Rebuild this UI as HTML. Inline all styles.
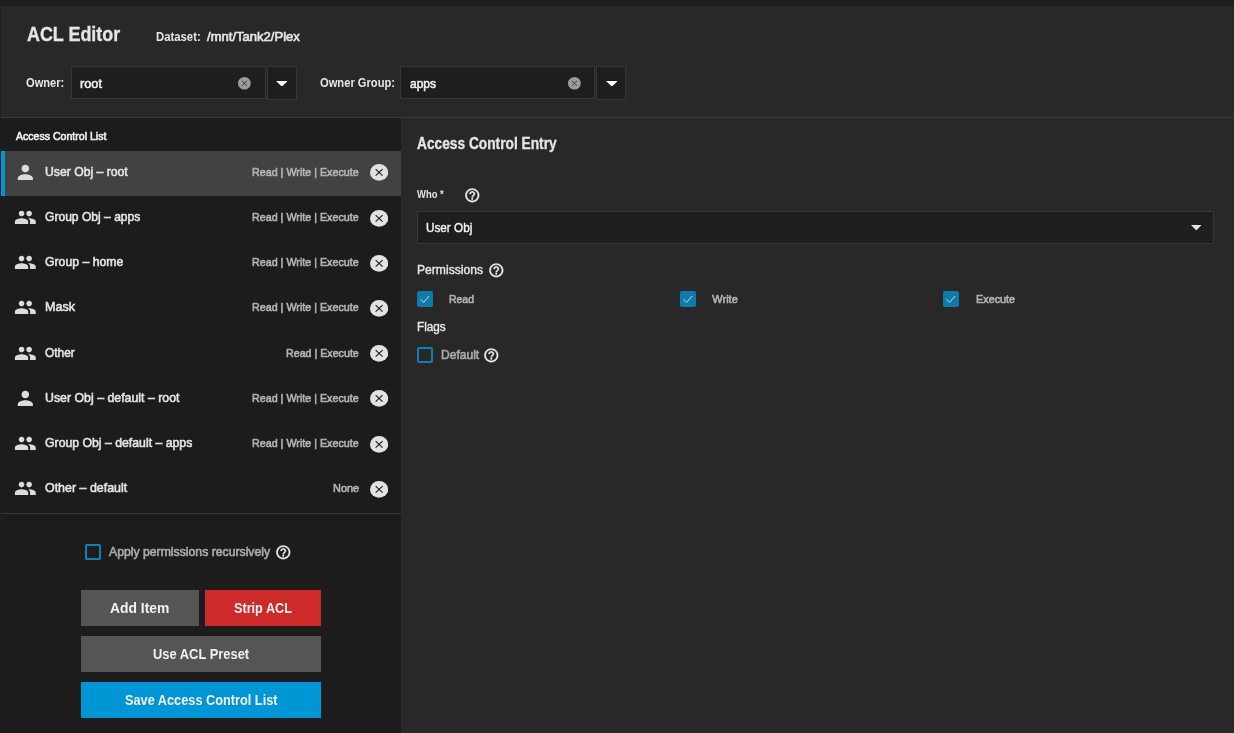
<!DOCTYPE html>
<html lang="en"><head><meta charset="utf-8"><title>ACL Editor</title>
<style>
html,body{margin:0;padding:0;}
body{width:1234px;height:733px;overflow:hidden;background:#1e1e1e;position:relative;font-family:"Liberation Sans",sans-serif;}
.b{position:absolute;display:block;}
.t{position:absolute;line-height:0;white-space:nowrap;transform-origin:0 0;}
#w{position:absolute;left:0;top:0;width:1234px;height:733px;will-change:transform;}
</style></head><body><div id="w">
<div class="b" style="left:1px;top:6px;width:1233px;height:111px;background:#282828;"></div>
<div class="b" style="left:1px;top:117px;width:1233px;height:1px;background:#3a3a3a;"></div>
<span class="t" style="left:26.50px;top:34.44px;font-size:19.5px;color:#e6e6e6;font-weight:700;transform:scaleX(0.9185);-webkit-text-stroke:0.3px;">ACL Editor</span>
<span class="t" style="left:155.80px;top:36.74px;font-size:12px;color:#e6e6e6;font-weight:700;transform:scaleX(0.9442);">Dataset:</span>
<span class="t" style="left:207.10px;top:36.74px;font-size:12px;color:#e6e6e6;transform:scaleX(1.0881);-webkit-text-stroke:0.6px;">/mnt/Tank2/Plex</span>
<span class="t" style="left:26.10px;top:82.84px;font-size:12px;color:#e6e6e6;font-weight:700;transform:scaleX(0.9264);">Owner:</span>
<div class="b" style="left:71px;top:66px;width:195px;height:33px;background:#1e1e1e;border:1px solid #373737;box-sizing:border-box;"></div>
<span class="t" style="left:79.50px;top:83.90px;font-size:13px;color:#f0f0f0;transform:scaleX(0.9819);-webkit-text-stroke:0.55px;">root</span>
<svg class="b" style="left:238.1px;top:77.3px" width="12.8" height="12.6" viewBox="0 0 20 20" preserveAspectRatio="none"><circle cx="10" cy="10" r="10" fill="#9b9b9b"/><path d="M6 6l8 8M14 6l-8 8" stroke="#2a2a2a" stroke-width="1.3" fill="none"/></svg>
<div class="b" style="left:267px;top:66px;width:30px;height:34px;background:#1e1e1e;border:1px solid #373737;box-sizing:border-box;"></div>
<svg class="b" style="left:275.6px;top:80.7px" width="11.8" height="5.6" viewBox="0 0 10 5" preserveAspectRatio="none"><path fill="#fff" d="M0 0h10L5 5z"/></svg>
<span class="t" style="left:319.50px;top:82.84px;font-size:12px;color:#e6e6e6;font-weight:700;transform:scaleX(0.9297);">Owner Group:</span>
<div class="b" style="left:400px;top:66px;width:195px;height:33px;background:#1e1e1e;border:1px solid #373737;box-sizing:border-box;"></div>
<span class="t" style="left:409.50px;top:83.90px;font-size:13px;color:#f0f0f0;transform:scaleX(0.9188);-webkit-text-stroke:0.55px;">apps</span>
<svg class="b" style="left:568.0px;top:77.3px" width="12.8" height="12.6" viewBox="0 0 20 20" preserveAspectRatio="none"><circle cx="10" cy="10" r="10" fill="#9b9b9b"/><path d="M6 6l8 8M14 6l-8 8" stroke="#2a2a2a" stroke-width="1.3" fill="none"/></svg>
<div class="b" style="left:596px;top:66px;width:30px;height:34px;background:#1e1e1e;border:1px solid #373737;box-sizing:border-box;"></div>
<svg class="b" style="left:605.5px;top:80.7px" width="11.8" height="5.6" viewBox="0 0 10 5" preserveAspectRatio="none"><path fill="#fff" d="M0 0h10L5 5z"/></svg>
<div class="b" style="left:1px;top:118px;width:400px;height:615px;background:#1c1c1c;"></div>
<span class="t" style="left:16.10px;top:136.19px;font-size:11px;color:#f0f0f0;transform:scaleX(0.9603);-webkit-text-stroke:0.6px;">Access Control List</span>
<div class="b" style="left:1px;top:151px;width:400px;height:45px;background:#424242;border-left:4px solid #0095d5;box-sizing:border-box;"></div>
<svg class="b" style="left:14.15px;top:161.15px" width="22.7" height="22.7" viewBox="0 0 24 24" preserveAspectRatio="none"><path fill="#dcdcdc" d="M12 12c2.21 0 4-1.79 4-4s-1.79-4-4-4-4 1.79-4 4 1.79 4 4 4zm0 2c-2.67 0-8 1.34-8 4v2h16v-2c0-2.660-5.330-4-8-4z"/></svg>
<span class="t" style="left:44.90px;top:171.60px;font-size:13px;color:#e6e6e6;transform:scaleX(0.9383);-webkit-text-stroke:0.55px;">User Obj – root</span>
<span class="t" style="left:252.00px;top:172.19px;font-size:11px;color:#b4b4b4;transform:scaleX(0.9748);-webkit-text-stroke:0.6px;">Read | Write | Execute</span>
<svg class="b" style="left:370.0px;top:164.0px" width="18.2" height="16.8" viewBox="0 0 20 20" preserveAspectRatio="none"><circle cx="10" cy="10" r="10" fill="#e2e2e2"/><path d="M6.2 6.2l7.6 7.6M13.8 6.2l-7.6 7.6" stroke="#1c1c1c" stroke-width="1.2" fill="none"/></svg>
<svg class="b" style="left:14.15px;top:205.95px" width="22.7" height="22.7" viewBox="0 0 24 24" preserveAspectRatio="none"><path fill="#dcdcdc" d="M16 11c1.660 0 2.990-1.340 2.990-3S17.660 5 16 5c-1.660 0-3 1.340-3 3s1.340 3 3 3zm-8 0c1.660 0 2.990-1.340 2.990-3S9.660 5 8 5C6.340 5 5 6.340 5 8s1.340 3 3 3zm0 2c-2.330 0-7 1.170-7 3.500V19h14v-2.500c0-2.330-4.670-3.500-7-3.500zm8 0c-.29 0-.62.020-.97.050 1.160.84 1.970 1.970 1.970 3.450V19h6v-2.500c0-2.330-4.670-3.500-7-3.500z"/></svg>
<span class="t" style="left:44.90px;top:216.60px;font-size:13px;color:#e6e6e6;transform:scaleX(0.9288);-webkit-text-stroke:0.55px;">Group Obj – apps</span>
<span class="t" style="left:252.00px;top:217.19px;font-size:11px;color:#b4b4b4;transform:scaleX(0.9748);-webkit-text-stroke:0.6px;">Read | Write | Execute</span>
<svg class="b" style="left:370.0px;top:209.9px" width="18.2" height="16.8" viewBox="0 0 20 20" preserveAspectRatio="none"><circle cx="10" cy="10" r="10" fill="#e2e2e2"/><path d="M6.2 6.2l7.6 7.6M13.8 6.2l-7.6 7.6" stroke="#1c1c1c" stroke-width="1.2" fill="none"/></svg>
<svg class="b" style="left:14.15px;top:250.95px" width="22.7" height="22.7" viewBox="0 0 24 24" preserveAspectRatio="none"><path fill="#dcdcdc" d="M16 11c1.660 0 2.990-1.340 2.990-3S17.660 5 16 5c-1.660 0-3 1.340-3 3s1.340 3 3 3zm-8 0c1.660 0 2.990-1.340 2.990-3S9.660 5 8 5C6.340 5 5 6.340 5 8s1.340 3 3 3zm0 2c-2.330 0-7 1.170-7 3.500V19h14v-2.500c0-2.330-4.670-3.500-7-3.500zm8 0c-.29 0-.62.020-.97.050 1.160.84 1.970 1.970 1.970 3.450V19h6v-2.500c0-2.330-4.670-3.500-7-3.500z"/></svg>
<span class="t" style="left:44.90px;top:261.60px;font-size:13px;color:#e6e6e6;transform:scaleX(0.9421);-webkit-text-stroke:0.55px;">Group – home</span>
<span class="t" style="left:252.00px;top:262.19px;font-size:11px;color:#b4b4b4;transform:scaleX(0.9748);-webkit-text-stroke:0.6px;">Read | Write | Execute</span>
<svg class="b" style="left:370.0px;top:255.0px" width="18.2" height="16.8" viewBox="0 0 20 20" preserveAspectRatio="none"><circle cx="10" cy="10" r="10" fill="#e2e2e2"/><path d="M6.2 6.2l7.6 7.6M13.8 6.2l-7.6 7.6" stroke="#1c1c1c" stroke-width="1.2" fill="none"/></svg>
<svg class="b" style="left:14.15px;top:296.05px" width="22.7" height="22.7" viewBox="0 0 24 24" preserveAspectRatio="none"><path fill="#dcdcdc" d="M16 11c1.660 0 2.990-1.340 2.990-3S17.660 5 16 5c-1.660 0-3 1.340-3 3s1.340 3 3 3zm-8 0c1.660 0 2.990-1.340 2.990-3S9.660 5 8 5C6.340 5 5 6.340 5 8s1.340 3 3 3zm0 2c-2.330 0-7 1.170-7 3.500V19h14v-2.500c0-2.330-4.670-3.500-7-3.500zm8 0c-.29 0-.62.020-.97.050 1.160.84 1.970 1.970 1.970 3.450V19h6v-2.500c0-2.330-4.670-3.500-7-3.500z"/></svg>
<span class="t" style="left:44.90px;top:306.70px;font-size:13px;color:#e6e6e6;transform:scaleX(0.9680);-webkit-text-stroke:0.55px;">Mask</span>
<span class="t" style="left:252.00px;top:307.29px;font-size:11px;color:#b4b4b4;transform:scaleX(0.9748);-webkit-text-stroke:0.6px;">Read | Write | Execute</span>
<svg class="b" style="left:370.0px;top:300.0px" width="18.2" height="16.8" viewBox="0 0 20 20" preserveAspectRatio="none"><circle cx="10" cy="10" r="10" fill="#e2e2e2"/><path d="M6.2 6.2l7.6 7.6M13.8 6.2l-7.6 7.6" stroke="#1c1c1c" stroke-width="1.2" fill="none"/></svg>
<svg class="b" style="left:14.15px;top:342.05px" width="22.7" height="22.7" viewBox="0 0 24 24" preserveAspectRatio="none"><path fill="#dcdcdc" d="M16 11c1.660 0 2.990-1.340 2.990-3S17.660 5 16 5c-1.660 0-3 1.340-3 3s1.340 3 3 3zm-8 0c1.660 0 2.990-1.340 2.990-3S9.660 5 8 5C6.340 5 5 6.340 5 8s1.340 3 3 3zm0 2c-2.330 0-7 1.170-7 3.500V19h14v-2.500c0-2.330-4.670-3.500-7-3.500zm8 0c-.29 0-.62.020-.97.050 1.160.84 1.970 1.970 1.970 3.450V19h6v-2.500c0-2.330-4.670-3.500-7-3.500z"/></svg>
<span class="t" style="left:44.90px;top:352.50px;font-size:13px;color:#e6e6e6;transform:scaleX(0.9165);-webkit-text-stroke:0.55px;">Other</span>
<span class="t" style="left:285.90px;top:353.09px;font-size:11px;color:#b4b4b4;transform:scaleX(0.9705);-webkit-text-stroke:0.6px;">Read | Execute</span>
<svg class="b" style="left:370.0px;top:345.0px" width="18.2" height="16.8" viewBox="0 0 20 20" preserveAspectRatio="none"><circle cx="10" cy="10" r="10" fill="#e2e2e2"/><path d="M6.2 6.2l7.6 7.6M13.8 6.2l-7.6 7.6" stroke="#1c1c1c" stroke-width="1.2" fill="none"/></svg>
<svg class="b" style="left:14.15px;top:386.85px" width="22.7" height="22.7" viewBox="0 0 24 24" preserveAspectRatio="none"><path fill="#dcdcdc" d="M12 12c2.21 0 4-1.79 4-4s-1.79-4-4-4-4 1.79-4 4 1.79 4 4 4zm0 2c-2.67 0-8 1.34-8 4v2h16v-2c0-2.660-5.330-4-8-4z"/></svg>
<span class="t" style="left:44.90px;top:397.50px;font-size:13px;color:#e6e6e6;transform:scaleX(0.9497);-webkit-text-stroke:0.55px;">User Obj – default – root</span>
<span class="t" style="left:252.00px;top:398.09px;font-size:11px;color:#b4b4b4;transform:scaleX(0.9748);-webkit-text-stroke:0.6px;">Read | Write | Execute</span>
<svg class="b" style="left:370.0px;top:390.0px" width="18.2" height="16.8" viewBox="0 0 20 20" preserveAspectRatio="none"><circle cx="10" cy="10" r="10" fill="#e2e2e2"/><path d="M6.2 6.2l7.6 7.6M13.8 6.2l-7.6 7.6" stroke="#1c1c1c" stroke-width="1.2" fill="none"/></svg>
<svg class="b" style="left:14.15px;top:431.95px" width="22.7" height="22.7" viewBox="0 0 24 24" preserveAspectRatio="none"><path fill="#dcdcdc" d="M16 11c1.660 0 2.990-1.340 2.990-3S17.660 5 16 5c-1.660 0-3 1.340-3 3s1.340 3 3 3zm-8 0c1.660 0 2.990-1.340 2.990-3S9.660 5 8 5C6.340 5 5 6.340 5 8s1.340 3 3 3zm0 2c-2.330 0-7 1.170-7 3.500V19h14v-2.500c0-2.330-4.670-3.500-7-3.500zm8 0c-.29 0-.62.020-.97.050 1.160.84 1.970 1.970 1.970 3.450V19h6v-2.500c0-2.330-4.670-3.500-7-3.500z"/></svg>
<span class="t" style="left:44.90px;top:442.50px;font-size:13px;color:#e6e6e6;transform:scaleX(0.9436);-webkit-text-stroke:0.55px;">Group Obj – default – apps</span>
<span class="t" style="left:252.00px;top:443.09px;font-size:11px;color:#b4b4b4;transform:scaleX(0.9748);-webkit-text-stroke:0.6px;">Read | Write | Execute</span>
<svg class="b" style="left:370.0px;top:436.1px" width="18.2" height="16.8" viewBox="0 0 20 20" preserveAspectRatio="none"><circle cx="10" cy="10" r="10" fill="#e2e2e2"/><path d="M6.2 6.2l7.6 7.6M13.8 6.2l-7.6 7.6" stroke="#1c1c1c" stroke-width="1.2" fill="none"/></svg>
<svg class="b" style="left:14.15px;top:477.15px" width="22.7" height="22.7" viewBox="0 0 24 24" preserveAspectRatio="none"><path fill="#dcdcdc" d="M16 11c1.660 0 2.990-1.340 2.990-3S17.660 5 16 5c-1.660 0-3 1.340-3 3s1.340 3 3 3zm-8 0c1.660 0 2.990-1.340 2.990-3S9.660 5 8 5C6.340 5 5 6.340 5 8s1.340 3 3 3zm0 2c-2.330 0-7 1.170-7 3.500V19h14v-2.500c0-2.330-4.670-3.500-7-3.500zm8 0c-.29 0-.62.020-.97.050 1.160.84 1.970 1.970 1.970 3.450V19h6v-2.500c0-2.330-4.670-3.500-7-3.500z"/></svg>
<span class="t" style="left:44.90px;top:487.50px;font-size:13px;color:#e6e6e6;transform:scaleX(0.9558);-webkit-text-stroke:0.55px;">Other – default</span>
<span class="t" style="left:332.60px;top:488.09px;font-size:11px;color:#b4b4b4;transform:scaleX(0.9925);-webkit-text-stroke:0.6px;">None</span>
<svg class="b" style="left:370.0px;top:481.0px" width="18.2" height="16.8" viewBox="0 0 20 20" preserveAspectRatio="none"><circle cx="10" cy="10" r="10" fill="#e2e2e2"/><path d="M6.2 6.2l7.6 7.6M13.8 6.2l-7.6 7.6" stroke="#1c1c1c" stroke-width="1.2" fill="none"/></svg>
<div class="b" style="left:1px;top:513px;width:400px;height:1px;background:#3a3a3a;"></div>
<div class="b" style="left:85px;top:544px;width:16px;height:16px;border:2px solid #0f7fb6;box-sizing:border-box;border-radius:1.5px;"></div>
<span class="t" style="left:109.10px;top:552.04px;font-size:12.3px;color:#ababab;transform:scaleX(0.9947);-webkit-text-stroke:0.6px;">Apply permissions recursively</span>
<svg class="b" style="left:274.8px;top:543.6px" width="16.6" height="16.6" viewBox="0 0 24 24" preserveAspectRatio="none"><path fill="#f4f4f4" stroke="#f4f4f4" stroke-width="0.5" d="M11 18h2v-2h-2v2zm1-16C6.480 2 2 6.480 2 12s4.480 10 10 10 10-4.480 10-10S17.520 2 12 2zm0 18c-4.410 0-8-3.590-8-8s3.590-8 8-8 8 3.590 8 8-3.590 8-8 8zm0-14c-2.210 0-4 1.790-4 4h2c0-1.100.9-2 2-2s2 .9 2 2c0 2-3 1.750-3 5h2c0-2.250 3-2.500 3-5 0-2.210-1.790-4-4-4z"/></svg>
<div class="b" style="left:81px;top:590px;width:118px;height:36px;background:#555555;"></div>
<span class="t" style="left:110.10px;top:607.85px;font-size:14px;color:#f2f2f2;font-weight:700;transform:scaleX(0.9901);">Add Item</span>
<div class="b" style="left:205px;top:590px;width:116px;height:36px;background:#cd2a2a;"></div>
<span class="t" style="left:233.70px;top:607.85px;font-size:14px;color:#f2f2f2;font-weight:700;transform:scaleX(0.9042);">Strip ACL</span>
<div class="b" style="left:81px;top:636px;width:240px;height:36px;background:#555555;"></div>
<span class="t" style="left:153.10px;top:653.95px;font-size:14px;color:#f2f2f2;font-weight:700;transform:scaleX(0.9217);">Use ACL Preset</span>
<div class="b" style="left:81px;top:682px;width:240px;height:36px;background:#0095d5;"></div>
<span class="t" style="left:124.60px;top:699.85px;font-size:14px;color:#f2f2f2;font-weight:700;transform:scaleX(0.9102);">Save Access Control List</span>
<div class="b" style="left:401px;top:118px;width:833px;height:615px;background:#282828;"></div>
<span class="t" style="left:416.80px;top:142.99px;font-size:16.2px;color:#e6e6e6;font-weight:700;transform:scaleX(0.8484);-webkit-text-stroke:0.3px;">Access Control Entry</span>
<span class="t" style="left:417.40px;top:194.26px;font-size:10.5px;color:#e6e6e6;font-weight:700;transform:scaleX(0.8980);">Who *</span>
<svg class="b" style="left:463.9px;top:186.5px" width="16.6" height="16.6" viewBox="0 0 24 24" preserveAspectRatio="none"><path fill="#f4f4f4" stroke="#f4f4f4" stroke-width="0.5" d="M11 18h2v-2h-2v2zm1-16C6.480 2 2 6.480 2 12s4.480 10 10 10 10-4.480 10-10S17.520 2 12 2zm0 18c-4.410 0-8-3.590-8-8s3.590-8 8-8 8 3.590 8 8-3.590 8-8 8zm0-14c-2.210 0-4 1.790-4 4h2c0-1.100.9-2 2-2s2 .9 2 2c0 2-3 1.750-3 5h2c0-2.250 3-2.500 3-5 0-2.210-1.790-4-4-4z"/></svg>
<div class="b" style="left:417px;top:211px;width:797px;height:33px;background:#1e1e1e;border:1px solid #373737;box-sizing:border-box;"></div>
<span class="t" style="left:426.10px;top:227.50px;font-size:13px;color:#f4f4f4;transform:scaleX(0.9026);-webkit-text-stroke:0.4px;">User Obj</span>
<svg class="b" style="left:1190.7px;top:224.7px" width="10.6" height="5.4" viewBox="0 0 10 5" preserveAspectRatio="none"><path fill="#e4e4e4" d="M0 0h10L5 5z"/></svg>
<span class="t" style="left:417.40px;top:270.03px;font-size:12.6px;color:#e6e6e6;transform:scaleX(0.9624);-webkit-text-stroke:0.4px;">Permissions</span>
<svg class="b" style="left:488.3px;top:261.6px" width="16.6" height="16.6" viewBox="0 0 24 24" preserveAspectRatio="none"><path fill="#f4f4f4" stroke="#f4f4f4" stroke-width="0.5" d="M11 18h2v-2h-2v2zm1-16C6.480 2 2 6.480 2 12s4.480 10 10 10 10-4.480 10-10S17.520 2 12 2zm0 18c-4.410 0-8-3.590-8-8s3.590-8 8-8 8 3.590 8 8-3.590 8-8 8zm0-14c-2.210 0-4 1.790-4 4h2c0-1.100.9-2 2-2s2 .9 2 2c0 2-3 1.750-3 5h2c0-2.250 3-2.500 3-5 0-2.210-1.790-4-4-4z"/></svg>
<div class="b" style="left:417px;top:291px;width:16px;height:16px;background:#0e7bab;border-radius:2px;"></div>
<svg class="b" style="left:417px;top:291px" width="16" height="16" viewBox="0 0 16 16" preserveAspectRatio="none"><path fill="none" stroke="#c4dcea" stroke-width="1.0" d="M3.4 8.2l3.3 3.2 5.3-6.4"/></svg>
<span class="t" style="left:449.00px;top:299.29px;font-size:11px;color:#b4b4b4;transform:scaleX(0.9507);-webkit-text-stroke:0.6px;">Read</span>
<div class="b" style="left:680px;top:291px;width:16px;height:16px;background:#0e7bab;border-radius:2px;"></div>
<svg class="b" style="left:680px;top:291px" width="16" height="16" viewBox="0 0 16 16" preserveAspectRatio="none"><path fill="none" stroke="#c4dcea" stroke-width="1.0" d="M3.4 8.2l3.3 3.2 5.3-6.4"/></svg>
<span class="t" style="left:712.30px;top:299.29px;font-size:11px;color:#b4b4b4;-webkit-text-stroke:0.6px;">Write</span>
<div class="b" style="left:943px;top:291px;width:16px;height:16px;background:#0e7bab;border-radius:2px;"></div>
<svg class="b" style="left:943px;top:291px" width="16" height="16" viewBox="0 0 16 16" preserveAspectRatio="none"><path fill="none" stroke="#c4dcea" stroke-width="1.0" d="M3.4 8.2l3.3 3.2 5.3-6.4"/></svg>
<span class="t" style="left:975.50px;top:299.29px;font-size:11px;color:#b4b4b4;transform:scaleX(0.9836);-webkit-text-stroke:0.6px;">Execute</span>
<span class="t" style="left:417.40px;top:326.93px;font-size:12.6px;color:#e6e6e6;transform:scaleX(0.9319);-webkit-text-stroke:0.4px;">Flags</span>
<div class="b" style="left:417px;top:347px;width:16px;height:16px;border:2px solid #0f7fb6;box-sizing:border-box;border-radius:2px;"></div>
<span class="t" style="left:441.20px;top:354.67px;font-size:12.5px;color:#ababab;transform:scaleX(0.9644);-webkit-text-stroke:0.6px;">Default</span>
<svg class="b" style="left:483.3px;top:346.6px" width="16.6" height="16.6" viewBox="0 0 24 24" preserveAspectRatio="none"><path fill="#f4f4f4" stroke="#f4f4f4" stroke-width="0.5" d="M11 18h2v-2h-2v2zm1-16C6.480 2 2 6.480 2 12s4.480 10 10 10 10-4.480 10-10S17.520 2 12 2zm0 18c-4.410 0-8-3.590-8-8s3.590-8 8-8 8 3.590 8 8-3.590 8-8 8zm0-14c-2.210 0-4 1.790-4 4h2c0-1.100.9-2 2-2s2 .9 2 2c0 2-3 1.750-3 5h2c0-2.250 3-2.500 3-5 0-2.210-1.790-4-4-4z"/></svg>
</div></body></html>
